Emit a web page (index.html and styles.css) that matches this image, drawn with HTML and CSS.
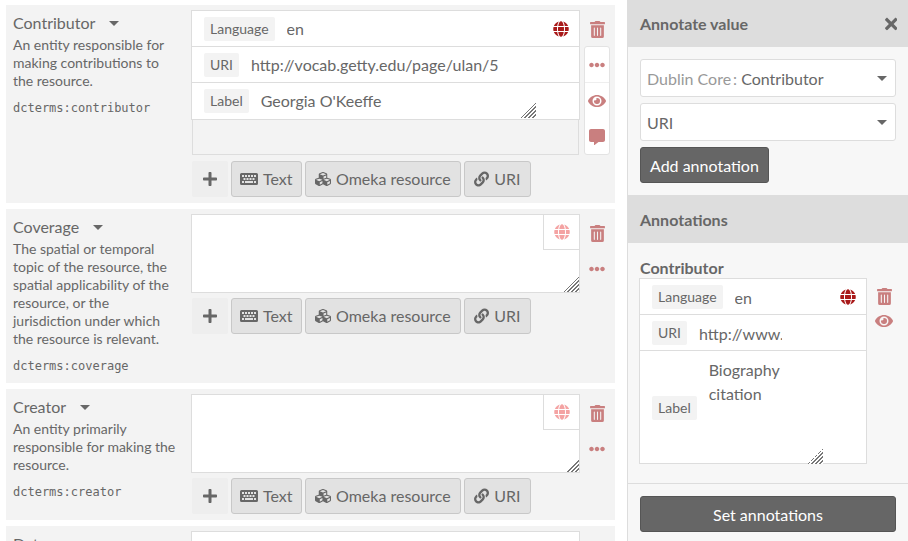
FILE: index.html
```html
<!DOCTYPE html>
<html lang="en">
<head>
  <meta charset="UTF-8" />
  <meta name="viewport" content="width=device-width, initial-scale=1.0"/>
  <title>Edit item values</title>
  <link rel="stylesheet" href="styles.css">
</head>
<body>
  <svg class="defs" width="0" height="0" aria-hidden="true">
    <symbol id="i-plus" viewBox="0 0 448 512"><path d="M416 208H272V64c0-17.67-14.33-32-32-32h-32c-17.67 0-32 14.33-32 32v144H32c-17.67 0-32 14.33-32 32v32c0 17.67 14.33 32 32 32h144v144c0 17.67 14.33 32 32 32h32c17.67 0 32-14.33 32-32V304h144c17.67 0 32-14.33 32-32v-32c0-17.67-14.33-32-32-32z"/></symbol>
    <symbol id="i-times" viewBox="0 0 352 512"><path d="M242.72 256l100.07-100.07c12.28-12.28 12.28-32.19 0-44.48l-22.24-22.24c-12.28-12.28-32.19-12.28-44.48 0L176 189.28 75.93 89.21c-12.28-12.28-32.19-12.28-44.48 0L9.21 111.45c-12.28 12.28-12.28 32.19 0 44.48L109.28 256 9.21 356.07c-12.28 12.28-12.28 32.19 0 44.48l22.24 22.24c12.28 12.28 32.2 12.28 44.48 0L176 322.72l100.07 100.07c12.28 12.28 32.2 12.28 44.48 0l22.24-22.24c12.28-12.28 12.28-32.19 0-44.48L242.72 256z"/></symbol>
    <symbol id="i-dots" viewBox="0 0 512 512"><path d="M328 256c0 39.8-32.2 72-72 72s-72-32.2-72-72 32.2-72 72-72 72 32.2 72 72zm104-72c-39.8 0-72 32.2-72 72s32.2 72 72 72 72-32.2 72-72-32.2-72-72-72zm-352 0c-39.8 0-72 32.2-72 72s32.2 72 72 72 72-32.2 72-72-32.2-72-72-72z"/></symbol>
    <symbol id="i-comment" viewBox="0 0 512 512"><path d="M448 0H64C28.7 0 0 28.7 0 64v288c0 35.3 28.7 64 64 64h96v84c0 9.8 11.2 15.5 19.1 9.7L304 416h144c35.3 0 64-28.7 64-64V64c0-35.3-28.7-64-64-64z"/></symbol>
    <symbol id="i-eye" viewBox="0 0 576 512"><path d="M572.52 241.4C518.29 135.59 410.93 64 288 64S57.68 135.64 3.48 241.41a32.35 32.35 0 0 0 0 29.19C57.71 376.41 165.07 448 288 448s230.32-71.64 284.52-177.41a32.35 32.35 0 0 0 0-29.19zM288 400a144 144 0 1 1 144-144 143.93 143.93 0 0 1-144 144zm0-240a95.31 95.31 0 0 0-25.31 3.79 47.85 47.85 0 0 1-66.9 66.9A95.78 95.78 0 1 0 288 160z"/></symbol>
    <symbol id="i-trash" viewBox="0 0 448 512"><path d="M32 464a48 48 0 0 0 48 48h288a48 48 0 0 0 48-48V128H32zm272-256a16 16 0 0 1 32 0v224a16 16 0 0 1-32 0zm-96 0a16 16 0 0 1 32 0v224a16 16 0 0 1-32 0zm-96 0a16 16 0 0 1 32 0v224a16 16 0 0 1-32 0zM432 32H312l-9.4-18.7A24 24 0 0 0 281.1 0H166.8a23.72 23.72 0 0 0-21.4 13.3L136 32H16A16 16 0 0 0 0 48v32a16 16 0 0 0 16 16h416a16 16 0 0 0 16-16V48a16 16 0 0 0-16-16z"/></symbol>
    <symbol id="i-globe" viewBox="0 0 496 512"><path d="M336.5 160C322 70.7 287.8 8 248 8s-74 62.7-88.5 152h177zM152 256c0 22.2 1.2 43.5 3.3 64h185.3c2.1-20.5 3.3-41.8 3.3-64s-1.2-43.5-3.3-64H155.3c-2.1 20.5-3.3 41.8-3.3 64zm324.7-96c-28.6-67.9-86.5-120.4-158-141.6 24.4 33.8 41.2 84.7 50 141.6h108zM177.2 18.4C105.8 39.6 47.8 92.1 19.3 160h108c8.7-56.9 25.5-107.8 49.9-141.6zM487.4 192H372.7c2.1 21 3.3 42.5 3.3 64s-1.2 43-3.3 64h114.6c5.5-20.5 8.6-41.8 8.6-64s-3.1-43.5-8.5-64zM120 256c0-21.5 1.2-43 3.3-64H8.6C3.2 212.5 0 233.8 0 256s3.2 43.5 8.6 64h114.6c-2-21-3.2-42.5-3.2-64zm39.5 96c14.5 89.3 48.7 152 88.5 152s74-62.7 88.5-152h-177zm159.3 141.6c71.4-21.2 129.4-73.7 158-141.6h-108c-8.8 56.9-25.6 107.8-50 141.6zM19.3 352c28.6 67.9 86.5 120.4 158 141.6-24.4-33.8-41.2-84.7-50-141.6h-108z"/></symbol>
    <symbol id="i-keyboard" viewBox="0 0 576 512"><path fill-rule="evenodd" d="M48 64h480a48 48 0 0 1 48 48v288a48 48 0 0 1-48 48H48a48 48 0 0 1-48-48V112a48 48 0 0 1 48-48zM64 128v64h64v-64zm96 0v64h64v-64zm96 0v64h64v-64zm96 0v64h64v-64zm96 0v64h64v-64zM112 224v64h64v-64zm96 0v64h64v-64zm96 0v64h64v-64zm96 0v64h64v-64zM64 320v64h64v-64zm96 0v64h256v-64zm288 0v64h64v-64z"/></symbol>
    <symbol id="i-cubes" viewBox="0 0 512 512"><path d="M488.6 250.2L392 214V105.5c0-15-9.3-28.4-23.4-33.7l-100-37.5c-8.1-3.1-17.1-3.1-25.3 0l-100 37.5c-14.1 5.3-23.4 18.7-23.4 33.7V214l-96.6 36.2C9.3 255.5 0 268.9 0 283.9V394c0 13.6 7.7 26.1 19.9 32.2l100 50c10.1 5.1 22.1 5.1 32.2 0l103.9-52 103.9 52c10.1 5.1 22.1 5.1 32.2 0l100-50c12.2-6.1 19.9-18.6 19.9-32.2V283.9c0-15-9.3-28.4-23.4-33.7zM358 214.8l-85 31.9v-68.2l85-37v73.3zM154 104.1l102-38.2 102 38.2v.6l-102 41.4-102-41.4v-.6zm84 291.1l-85 42.5v-79.1l85-38.8v75.4zm0-112l-102 41.4-102-41.4v-.6l102-38.2 102 38.2v.6zm240 112l-85 42.5v-79.1l85-38.8v75.4zm0-112l-102 41.4-102-41.4v-.6l102-38.2 102 38.2v.6z"/></symbol>
    <symbol id="i-link" viewBox="0 0 512 512"><path d="M326.612 185.391c59.747 59.809 58.927 155.698.36 214.59-.11.12-.24.25-.36.37l-67.2 67.2c-59.27 59.27-155.699 59.262-214.96 0-59.27-59.26-59.27-155.7 0-214.96l37.106-37.106c9.84-9.84 26.786-3.3 27.294 10.606.648 17.722 3.826 35.527 9.69 52.721 1.986 5.822.567 12.262-3.783 16.612l-13.087 13.087c-28.026 28.026-28.905 73.66-1.155 101.96 28.024 28.579 74.086 28.749 102.325.51l67.2-67.19c28.191-28.191 28.073-73.757 0-101.83-3.701-3.694-7.429-6.564-10.341-8.569a16.037 16.037 0 0 1-6.947-12.606c-.396-10.567 3.348-21.456 11.698-29.806l21.054-21.055c5.521-5.521 14.182-6.199 20.584-1.731a152.482 152.482 0 0 1 20.522 17.197zM467.547 44.449c-59.261-59.262-155.69-59.27-214.96 0l-67.2 67.2c-.12.12-.25.25-.36.37-58.566 58.892-59.387 154.781.36 214.59a152.454 152.454 0 0 0 20.521 17.196c6.402 4.468 15.064 3.789 20.584-1.731l21.054-21.055c8.35-8.35 12.094-19.239 11.698-29.806a16.037 16.037 0 0 0-6.947-12.606c-2.912-2.005-6.64-4.875-10.341-8.569-28.073-28.073-28.191-73.639 0-101.83l67.2-67.19c28.239-28.239 74.3-28.069 102.325.51 27.75 28.3 26.872 73.934-1.155 101.96l-13.087 13.087c-4.35 4.35-5.769 10.79-3.783 16.612 5.864 17.194 9.042 34.999 9.69 52.721.509 13.906 17.454 20.446 27.294 10.606l37.106-37.106c59.271-59.259 59.271-155.699.001-214.959z"/></symbol>
  </svg>

  <main class="properties">
    <section class="field">
      <div class="field-meta">
        <h3 class="field-name">Contributor <span class="caret"></span></h3>
        <p class="field-desc">An entity responsible for making contributions to the resource.</p>
        <p class="field-term">dcterms:contributor</p>
      </div>
      <div class="field-values">
        <div class="value-stack">
          <div class="value-row">
            <span class="tag">Language</span>
            <input class="value-input" value="en">
            <svg class="icon globe-on"><use href="#i-globe"/></svg>
          </div>
          <div class="value-row">
            <span class="tag">URI</span>
            <input class="value-input" value="http://vocab.getty.edu/page/ulan/5">
          </div>
          <div class="value-row value-row-label">
            <span class="tag">Label</span>
            <textarea class="value-text" rows="1">Georgia O'Keeffe</textarea>
          </div>
        </div>
        <div class="value-rest"></div>
        <div class="add-bar add-bar-first">
          <span class="add-plus"><svg class="icon"><use href="#i-plus"/></svg></span>
          <button class="add-btn add-btn-text"><svg class="icon icon-wide"><use href="#i-keyboard"/></svg>Text</button>
          <button class="add-btn add-btn-res"><svg class="icon"><use href="#i-cubes"/></svg>Omeka resource</button>
          <button class="add-btn"><svg class="icon icon-link"><use href="#i-link"/></svg>URI</button>
        </div>
      </div>
      <div class="field-actions">
        <a class="action"><svg class="icon icon-trash"><use href="#i-trash"/></svg></a>
        <div class="action-menu">
          <a class="action action-split"><svg class="icon"><use href="#i-dots"/></svg></a>
          <a class="action"><svg class="icon icon-eye"><use href="#i-eye"/></svg></a>
          <a class="action"><svg class="icon"><use href="#i-comment"/></svg></a>
        </div>
      </div>
    </section>

    <section class="field">
      <div class="field-meta">
        <h3 class="field-name">Coverage <span class="caret"></span></h3>
        <p class="field-desc">The spatial or temporal topic of the resource, the spatial applicability of the resource, or the jurisdiction under which the resource is relevant.</p>
        <p class="field-term">dcterms:coverage</p>
      </div>
      <div class="field-values">
        <div class="text-box">
          <textarea class="big-text"></textarea>
          <span class="lang-btn"><svg class="icon globe-off"><use href="#i-globe"/></svg></span>
        </div>
        <div class="add-bar">
          <span class="add-plus"><svg class="icon"><use href="#i-plus"/></svg></span>
          <button class="add-btn add-btn-text"><svg class="icon icon-wide"><use href="#i-keyboard"/></svg>Text</button>
          <button class="add-btn add-btn-res"><svg class="icon"><use href="#i-cubes"/></svg>Omeka resource</button>
          <button class="add-btn"><svg class="icon icon-link"><use href="#i-link"/></svg>URI</button>
        </div>
      </div>
      <div class="field-actions">
        <a class="action"><svg class="icon icon-trash"><use href="#i-trash"/></svg></a>
        <a class="action"><svg class="icon"><use href="#i-dots"/></svg></a>
      </div>
    </section>

    <section class="field">
      <div class="field-meta">
        <h3 class="field-name">Creator <span class="caret"></span></h3>
        <p class="field-desc">An entity primarily responsible for making the resource.</p>
        <p class="field-term">dcterms:creator</p>
      </div>
      <div class="field-values">
        <div class="text-box">
          <textarea class="big-text"></textarea>
          <span class="lang-btn"><svg class="icon globe-off"><use href="#i-globe"/></svg></span>
        </div>
        <div class="add-bar">
          <span class="add-plus"><svg class="icon"><use href="#i-plus"/></svg></span>
          <button class="add-btn add-btn-text"><svg class="icon icon-wide"><use href="#i-keyboard"/></svg>Text</button>
          <button class="add-btn add-btn-res"><svg class="icon"><use href="#i-cubes"/></svg>Omeka resource</button>
          <button class="add-btn"><svg class="icon icon-link"><use href="#i-link"/></svg>URI</button>
        </div>
      </div>
      <div class="field-actions">
        <a class="action"><svg class="icon icon-trash"><use href="#i-trash"/></svg></a>
        <a class="action"><svg class="icon"><use href="#i-dots"/></svg></a>
      </div>
    </section>

    <section class="field">
      <div class="field-meta">
        <h3 class="field-name">Date <span class="caret"></span></h3>
      </div>
      <div class="field-values">
        <div class="text-box">
          <textarea class="big-text"></textarea>
        </div>
      </div>
    </section>
  </main>

  <aside class="sidebar">
    <header class="side-head">
      <h2>Annotate value</h2>
      <svg class="icon close"><use href="#i-times"/></svg>
    </header>
    <div class="side-body">
      <div class="picker"><span><span class="muted">Dublin Core</span><span class="muted colon">:</span> Contributor</span><span class="caret"></span></div>
      <div class="picker"><span>URI</span><span class="caret"></span></div>
      <button class="dark-btn">Add annotation</button>
    </div>
    <header class="side-head side-head-sub">
      <h2>Annotations</h2>
    </header>
    <div class="side-list">
      <h4 class="note-title">Contributor</h4>
      <div class="note">
        <div class="value-stack note-stack">
          <div class="value-row">
            <span class="tag">Language</span>
            <input class="value-input" value="en">
            <svg class="icon globe-on"><use href="#i-globe"/></svg>
          </div>
          <div class="value-row">
            <span class="tag">URI</span>
            <input class="value-input note-url" value="http://www.getty.edu/">
          </div>
          <div class="value-row value-row-note">
            <span class="tag">Label</span>
            <textarea class="value-text note-text">Biography citation</textarea>
          </div>
        </div>
        <div class="note-actions">
          <a class="action-sm"><svg class="icon icon-trash"><use href="#i-trash"/></svg></a>
          <a class="action-sm"><svg class="icon icon-eye"><use href="#i-eye"/></svg></a>
        </div>
      </div>
    </div>
    <footer class="side-foot">
      <button class="dark-btn dark-btn-full">Set annotations</button>
    </footer>
  </aside>
</body>
</html>
```

FILE: styles.css
```css
* {
  box-sizing: border-box;
}
html, body {
  height: 541px;
  overflow: hidden;
}
body {
  margin: 0;
  display: flex;
  font-family: "Lato", sans-serif;
  font-size: 16px;
  color: #676767;
  background: #fff;
}
.defs {
  position: absolute;
}
h2, h3, h4, p {
  margin: 0;
}
button, input, textarea {
  font: inherit;
  color: inherit;
}
textarea::-webkit-resizer {
  background:
    linear-gradient(135deg, #fff 50%, transparent 50%),
    repeating-linear-gradient(135deg, #fff 0, #fff 1.5px, #777 1.5px, #777 2.8px);
}

.icon {
  width: 16px;
  height: 16px;
  fill: currentColor;
  flex: none;
}
.icon-wide {
  width: 18px;
}
.icon-eye {
  width: 18px;
  height: 18px;
}
.icon-trash {
  width: 15px;
  height: 17px;
}
.icon-link {
  width: 15px;
}
.globe-on {
  color: #a91919;
}
.globe-off {
  color: #f4a3a3;
}
.caret {
  display: inline-block;
  width: 0;
  height: 0;
  border-left: 5px solid transparent;
  border-right: 5px solid transparent;
  border-top: 5px solid currentColor;
}

/* property list */
.properties {
  width: 627px;
  flex: none;
  padding: 5px 12px 0 6px;
  display: flex;
  flex-direction: column;
  gap: 6px;
}
.field {
  display: flex;
  flex: none;
  background: #f3f3f3;
  padding: 5px 5px 6px 7px;
}
.field-meta {
  width: 178px;
  flex: none;
  padding: 1px 13px 2px 0;
}
.field-name {
  font-size: 16px;
  font-weight: 400;
  line-height: 24px;
}
.field-name .caret {
  margin-left: 10px;
  vertical-align: 3px;
}
.field-desc {
  font-size: 14px;
  line-height: 18px;
  margin-top: 1px;
}
.field-term {
  font-family: "DejaVu Sans Mono", monospace;
  font-size: 12px;
  line-height: 18px;
  margin-top: 9px;
}
.field-values {
  width: 389px;
  flex: none;
}

.value-stack {
  background: #fff;
  border: 1px solid #ddd;
}
.value-row {
  display: flex;
  align-items: center;
  height: 36px;
  padding: 0 10px 0 12px;
  border-bottom: 1px solid #ddd;
}
.value-row:last-child {
  border-bottom: 0;
}
.tag {
  flex: none;
  font-size: 14px;
  line-height: 24px;
  padding: 0 6px;
  background: #f3f3f3;
  border-radius: 2px;
}
.value-input {
  flex: 1;
  min-width: 0;
  border: 0;
  padding: 0 0 0 12px;
  outline: 0;
  background: none;
}
.value-row-label {
  height: 36px;
  padding-right: 43px;
}
.value-text {
  flex: 1;
  min-width: 0;
  height: 34px;
  border: 0;
  outline: 0;
  padding: 5px 0 0 12px;
  line-height: 24px;
  overflow: hidden;
  background: none;
  display: block;
}
.value-rest {
  height: 35px;
  margin: 0 1px;
  background: #f3f3f3;
  border: 1px solid #ddd;
  border-top: 0;
}

.text-box {
  position: relative;
  height: 79px;
}
.big-text {
  display: block;
  width: 100%;
  height: 79px;
  border: 1px solid #ddd;
  outline: 0;
  background: #fff;
  padding: 6px;
}
.lang-btn {
  position: absolute;
  top: 0;
  right: 0;
  width: 37px;
  height: 36px;
  display: flex;
  align-items: center;
  justify-content: center;
  background: #fff;
  border: 1px solid #ddd;
}

.add-bar {
  display: flex;
  gap: 3px;
  margin: 5px 0 0 1px;
}
.add-bar-first {
  margin-top: 6px;
}
.add-plus {
  width: 36px;
  height: 36px;
  display: flex;
  align-items: center;
  justify-content: center;
  background: #eee;
  border-radius: 2px;
}
.add-btn {
  height: 36px;
  display: flex;
  align-items: center;
  gap: 5px;
  padding: 0 9px 2px;
  background: #e2e2e2;
  border: 1px solid #c8c8c8;
  border-radius: 3px;
}
.add-btn .icon {
  margin-top: 2px;
}
.add-btn-text {
  padding: 0 8px 2px;
}
.add-btn-res {
  padding: 0 9.5px 2px;
}

.field-actions {
  width: 26px;
  flex: none;
  margin-left: 4px;
  color: #c97f7f;
}
.action {
  display: flex;
  align-items: center;
  justify-content: center;
  height: 36px;
  padding-top: 2px;
}
.action-menu {
  background: #fff;
  border: 1px solid #e3e3e3;
  border-radius: 3px;
  height: 109px;
}
.action-menu .action {
  height: 36px;
  padding-top: 0;
}
.action-split {
  border-bottom: 1px solid #eee;
}

/* sidebar */
.sidebar {
  flex: 1;
  min-width: 0;
  height: 541px;
  background: #f7f7f7;
  border-left: 1px solid #ddd;
  display: flex;
  flex-direction: column;
}
.side-head {
  height: 47px;
  flex: none;
  background: #ddd;
  padding: 0 12px;
  display: flex;
  align-items: center;
  justify-content: space-between;
}
.side-head h2 {
  font-size: 16px;
  font-weight: 700;
}
.side-head-sub {
  height: 48px;
}
.close {
  width: 12.5px;
  height: 18px;
  margin-right: -1px;
}
.side-body {
  padding: 12px;
  height: 148px;
  flex: none;
}
.picker {
  height: 38px;
  padding: 0 8px 0 6px;
  margin-bottom: 6px;
  display: flex;
  align-items: center;
  justify-content: space-between;
  background: #fff;
  border: 1px solid #ddd;
  border-radius: 3px;
}
.muted {
  color: #999;
}
.colon {
  margin-left: 2px;
}
.dark-btn {
  height: 36px;
  padding: 0 9px;
  background: #666;
  color: #fff;
  border: 1px solid #555;
  border-radius: 3px;
}
.dark-btn-full {
  width: 100%;
}
.side-list {
  flex: 1;
  padding: 15px 0 0 11px;
  border-bottom: 1px solid #ddd;
}
.note-title {
  font-size: 16px;
  font-weight: 700;
  line-height: 20px;
  margin-left: 1px;
}
.note {
  display: flex;
}
.note-stack {
  width: 228px;
  flex: none;
  height: 186px;
}
.note-stack .value-row {
  padding-top: 1px;
}
.note-url {
  flex: none;
  width: 95px;
}
.value-row-note {
  height: 113px;
  padding-right: 43px;
}
.note-text {
  height: 112px;
  padding: 6px 0 0 12px;
  overflow: hidden;
}
.note-actions {
  margin-left: 7px;
  color: #c97f7f;
  padding-top: 10px;
}
.action-sm {
  display: flex;
  justify-content: center;
  width: 20px;
  height: 24px;
}
.side-foot {
  height: 57px;
  flex: none;
  padding: 12px 12px 0;
}
```
